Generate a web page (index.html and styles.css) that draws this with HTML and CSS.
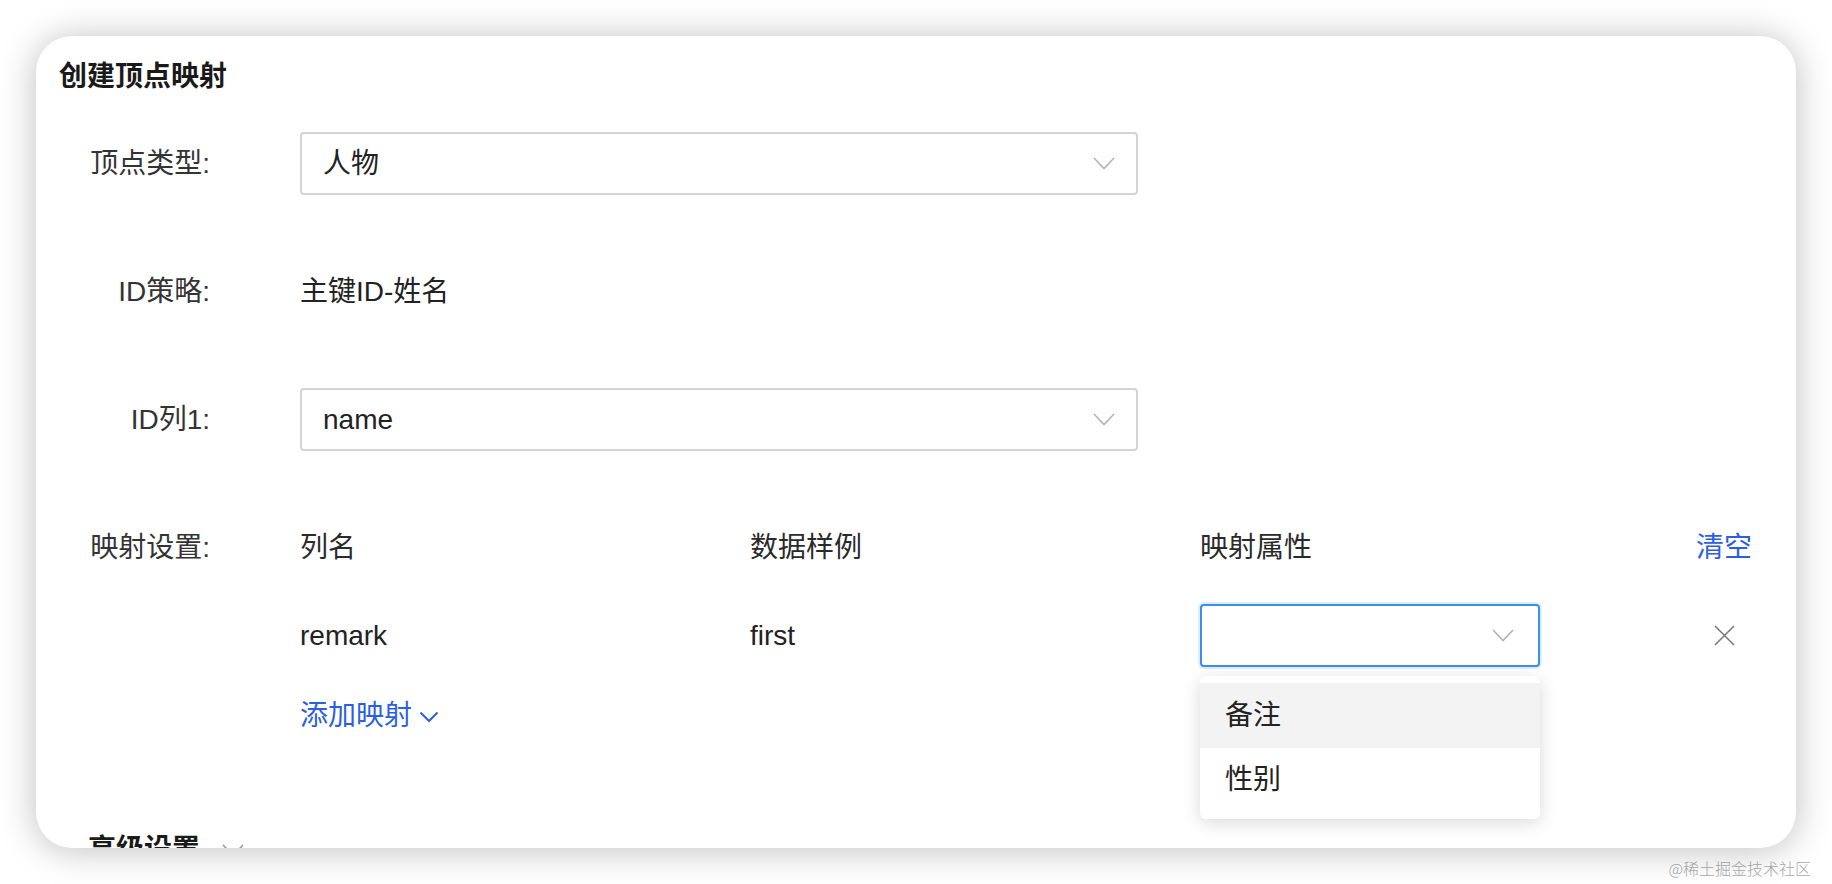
FILE: index.html
```html
<!DOCTYPE html>
<html lang="zh-CN">
<head>
<meta charset="utf-8">
<title>创建顶点映射</title>
<link rel="stylesheet" href="styles.css">
</head>
<body>
<div class="page">
  <div class="card">
    <h2 class="title">创建顶点映射</h2>
    <div class="form">
      <div class="item">
        <div class="label">顶点类型:</div>
        <div class="select">
          <span class="value">人物</span>
          <svg class="arrow" width="22" height="13" viewBox="0 0 22 13"><polyline points="1,1 11,11.5 21,1" fill="none" stroke="#b3b3b3" stroke-width="1.6"/></svg>
        </div>
      </div>
      <div class="item">
        <div class="label">ID策略:</div>
        <div class="text">主键ID-姓名</div>
      </div>
      <div class="item">
        <div class="label">ID列1:</div>
        <div class="select">
          <span class="value">name</span>
          <svg class="arrow" width="22" height="13" viewBox="0 0 22 13"><polyline points="1,1 11,11.5 21,1" fill="none" stroke="#b3b3b3" stroke-width="1.6"/></svg>
        </div>
      </div>
      <div class="item item-map">
        <div class="label label-map">映射设置:</div>
        <div class="mapping">
          <div class="map-row map-head">
            <div class="cell">列名</div>
            <div class="cell">数据样例</div>
            <div class="cell">映射属性</div>
            <div class="cell cell-end link">清空</div>
          </div>
          <div class="map-row map-data">
            <div class="cell">remark</div>
            <div class="cell">first</div>
            <div class="cell">
              <div class="select select-small focused">
                <span class="value"></span>
                <svg class="arrow" width="22" height="13" viewBox="0 0 22 13"><polyline points="1,1 11,11.5 21,1" fill="none" stroke="#b3b3b3" stroke-width="1.6"/></svg>
                <div class="dropdown">
                  <div class="option active">备注</div>
                  <div class="option">性别</div>
                </div>
              </div>
            </div>
            <div class="cell cell-end">
              <svg class="close" width="21" height="21" viewBox="0 0 21 21"><path d="M1 1 L20 20 M20 1 L1 20" fill="none" stroke="#7a7a7a" stroke-width="1.6"/></svg>
            </div>
          </div>
          <div class="add-row">
            <span class="link">添加映射</span>
            <svg class="add-arrow" width="20" height="12" viewBox="0 0 20 12"><polyline points="1.5,1.5 10,10 18.5,1.5" fill="none" stroke="#2c5fe0" stroke-width="2"/></svg>
          </div>
        </div>
      </div>
    </div>
    <div class="advanced">
      <span>高级设置</span>
      <svg class="adv-arrow" width="22" height="13" viewBox="0 0 22 13"><polyline points="1,1 11,11.5 21,1" fill="none" stroke="#999" stroke-width="1.6"/></svg>
    </div>
  </div>
  <div class="watermark">@稀土掘金技术社区</div>
</div>
</body>
</html>
```

FILE: styles.css
```css
html, body {
  margin: 0;
  padding: 0;
  background: #ffffff;
  overflow: hidden;
}

body {
  font-family: "Liberation Sans", "Noto Sans CJK SC", sans-serif;
  color: #222222;
}

.page {
  width: 1832px;
  height: 884px;
  padding-top: 36px;
  box-sizing: border-box;
}

.card {
  position: relative;
  margin-left: 36px;
  width: 1760px;
  height: 812px;
  box-sizing: border-box;
  padding: 21px 44px 0 23px;
  background: #ffffff;
  border-radius: 36px;
  box-shadow: 0 2px 36px rgba(0, 0, 0, 0.26);
  overflow: hidden;
}

.title {
  margin: 0;
  height: 40px;
  font-size: 28px;
  line-height: 40px;
  font-weight: 700;
  color: #1a1a1a;
}

.form {
  margin-top: 35px;
  display: flex;
  flex-direction: column;
}

.item {
  display: flex;
  align-items: center;
  height: 63px;
  margin-bottom: 65px;
}

.label {
  width: 151px;
  margin-right: 90px;
  flex: none;
  text-align: right;
  font-size: 28px;
  line-height: 40px;
  color: #333333;
  white-space: nowrap;
}

.text {
  font-size: 28px;
  line-height: 40px;
  color: #222222;
}

.select {
  position: relative;
  width: 838px;
  height: 63px;
  box-sizing: border-box;
  border: 2px solid #d4d4d4;
  border-radius: 4px;
  padding: 0 21px 0 21px;
  display: flex;
  align-items: center;
  justify-content: space-between;
  background: #ffffff;
}

.value {
  font-size: 28px;
  line-height: 40px;
  color: #222222;
}

.arrow {
  display: block;
  flex: none;
}

.select-small {
  width: 340px;
  padding-right: 24px;
}

.focused {
  border-color: #3b8fe8;
  box-shadow: 0 0 0 2px rgba(59, 143, 232, 0.16);
}

.item-map {
  align-items: flex-start;
  height: auto;
  margin-bottom: 94px;
}

.label-map {
  line-height: 63px;
}

.mapping {
  flex: 1;
  display: flex;
  flex-direction: column;
}

.map-row {
  display: grid;
  grid-template-columns: 450px 450px 340px 1fr;
  align-items: center;
  height: 63px;
}

.map-data {
  margin-top: 25px;
}

.cell {
  font-size: 28px;
  line-height: 40px;
  color: #222222;
}

.map-head .cell {
  color: #2a2a2a;
}

.cell-end {
  justify-self: end;
  width: 56px;
  display: flex;
  justify-content: center;
}

.link,
.map-head .cell.link {
  color: #2c5fe0;
}

.close {
  display: block;
}

.dropdown {
  position: absolute;
  top: calc(100% + 11px);
  left: -2px;
  width: 340px;
  padding: 7px 0;
  background: #ffffff;
  border-radius: 6px;
  box-shadow: 0 4px 18px rgba(0, 0, 0, 0.15);
  z-index: 5;
}

.option {
  height: 65px;
  line-height: 65px;
  padding-left: 25px;
  font-size: 28px;
  color: #222222;
}

.option + .option {
  height: 64px;
  line-height: 64px;
}

.active {
  background: #f3f3f3;
}

.add-row {
  margin-top: 29px;
  height: 40px;
  display: flex;
  align-items: center;
  font-size: 28px;
  line-height: 40px;
}

.add-arrow {
  display: block;
  margin-left: 7px;
  margin-top: 2px;
}

.advanced {
  display: flex;
  align-items: center;
  padding-left: 29px;
  height: 40px;
  font-size: 28px;
  line-height: 40px;
  font-weight: 700;
  color: #1a1a1a;
}

.adv-arrow {
  display: block;
  margin-left: 22px;
}

.watermark {
  margin-top: 9px;
  padding-right: 21px;
  text-align: right;
  font-size: 16px;
  line-height: 22px;
  color: #adadad;
  font-family: "Noto Sans CJK SC", sans-serif;
  font-weight: 300;
}
```
